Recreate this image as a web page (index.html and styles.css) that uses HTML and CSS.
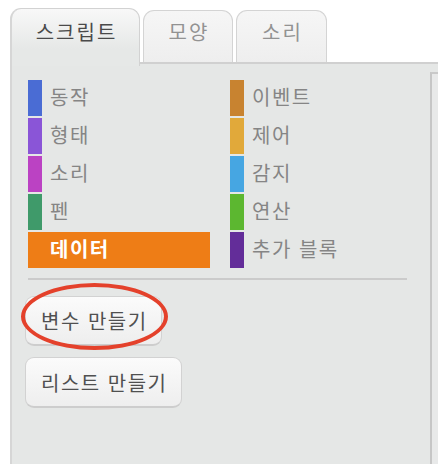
FILE: index.html
```html
<!DOCTYPE html>
<html lang="ko">
<head>
<meta charset="utf-8">
<link rel="stylesheet" href="styles.css">
</head>
<body>
<div class="tabs">
  <div class="tab active">스크립트</div>
  <div class="tab t2">모양</div>
  <div class="tab t3">소리</div>
</div>
<div class="panel">
  <div class="palette">
    <div class="cats">
      <div class="cat"><span class="bar c-motion"></span><span class="lbl">동작</span></div>
      <div class="cat"><span class="bar c-events"></span><span class="lbl">이벤트</span></div>
      <div class="cat"><span class="bar c-looks"></span><span class="lbl">형태</span></div>
      <div class="cat"><span class="bar c-control"></span><span class="lbl">제어</span></div>
      <div class="cat"><span class="bar c-sound"></span><span class="lbl">소리</span></div>
      <div class="cat"><span class="bar c-sensing"></span><span class="lbl">감지</span></div>
      <div class="cat"><span class="bar c-pen"></span><span class="lbl">펜</span></div>
      <div class="cat"><span class="bar c-ops"></span><span class="lbl">연산</span></div>
      <div class="cat selected"><span class="bar c-data"></span><span class="lbl">데이터</span></div>
      <div class="cat"><span class="bar c-more"></span><span class="lbl">추가 블록</span></div>
    </div>
    <div class="sep"></div>
    <div class="buttons">
      <div class="btn-wrap"><div class="btn">변수 만들기</div><div class="ring"></div></div>
      <div class="btn-wrap"><div class="btn">리스트 만들기</div></div>
    </div>
  </div>
  <div class="scripts"></div>
</div>
</body>
</html>
```
FILE: styles.css
```css
html, body {
  margin: 0;
  padding: 0;
  background: #ffffff;
  height: 100%;
  overflow: hidden;
}
body {
  font-family: "Noto Sans CJK KR", "Noto Sans", sans-serif;
  display: flex;
  flex-direction: column;
}
.tabs {
  display: flex;
  align-items: flex-start;
  padding: 8px 0 0 10px;
  gap: 3px;
  height: 54px;
}
.tab {
  box-sizing: border-box;
  border: 1px solid #d2d2d2;
  border-bottom: none;
  border-radius: 11px 11px 0 0;
  font-size: 20px;
  letter-spacing: 2px;
  text-indent: 2px;
  text-align: center;
  line-height: 28px;
}
.tab.active {
  width: 130px;
  height: 58px;
  padding-top: 9px;
  color: #4a4a4a;
  background: linear-gradient(#f8f8f8, #e6e8e7 70%);
  border-left: 2px solid #d6d6d6;
  position: relative;
  z-index: 1;
}
.tab.t2, .tab.t3 {
  margin-top: 2px;
  height: 52px;
  padding-top: 7px;
  color: #929292;
  background: linear-gradient(#f6f6f6, #eeeeee);
  border-color: #d4d4d4;
}
.tab.t2 { width: 90px; }
.tab.t3 { width: 91px; }
.panel {
  flex: 1;
  display: flex;
  margin-left: 10px;
  border-top: 2px solid #d0d0d0;
  border-left: 2px solid #d6d6d6;
  background: #e5e7e6;
}
.palette {
  width: 418px;
  flex: none;
  box-sizing: border-box;
  padding: 16px 0 0 13px;
}
.cats {
  margin-left: 3px;
  display: grid;
  grid-template-columns: 182px 182px;
  grid-auto-rows: 36px;
  column-gap: 20px;
  row-gap: 2px;
}
.cat {
  display: flex;
  align-items: center;
  font-size: 20px;
  letter-spacing: 1.5px;
  color: #858585;
}
.bar {
  width: 14px;
  align-self: stretch;
  flex: none;
}
.lbl {
  margin-left: 8px;
  margin-top: -3px;
}
.cat.selected {
  background: #ee7d16;
  color: #ffffff;
  font-weight: bold;
}
.c-motion { background: #4a6cd4; }
.c-looks { background: #8a55d7; }
.c-sound { background: #bb42c3; }
.c-pen { background: #3f9a6a; }
.c-data { background: #ee7d16; }
.c-events { background: #c88330; }
.c-control { background: #e1a93a; }
.c-sensing { background: #46a6e2; }
.c-ops { background: #5cb730; }
.c-more { background: #632d99; }
.sep {
  margin: 10px 0 0 3px;
  width: 379px;
  height: 2px;
  background: #cbcbcb;
}
.buttons {
  display: flex;
  flex-direction: column;
  align-items: flex-start;
  gap: 11px;
  margin-top: 16px;
}
.btn-wrap {
  position: relative;
}
.btn {
  box-sizing: border-box;
  height: 50px;
  padding: 0 13px 0 15px;
  display: flex;
  align-items: center;
  border: 1px solid #d2d2d2;
  border-bottom: 2px solid #cdcdcd;
  border-radius: 9px;
  background: linear-gradient(#fbfbfb, #eeeeee);
  font-size: 20px;
  letter-spacing: 1.5px;
  color: #505050;
  white-space: nowrap;
}
.btn-wrap + .btn-wrap .btn {
  height: 51px;
}
.ring {
  position: absolute;
  left: -4px;
  top: -13px;
  width: 147px;
  height: 67px;
  box-sizing: border-box;
  border: 4px solid #e4412b;
  border-radius: 50%;
}
.scripts {
  flex: 1;
  margin-top: 8px;
  border-top: 2px solid #c9c9c9;
  border-left: 2px solid #c6c6c6;
  background: #e8e9e9;
}
```
